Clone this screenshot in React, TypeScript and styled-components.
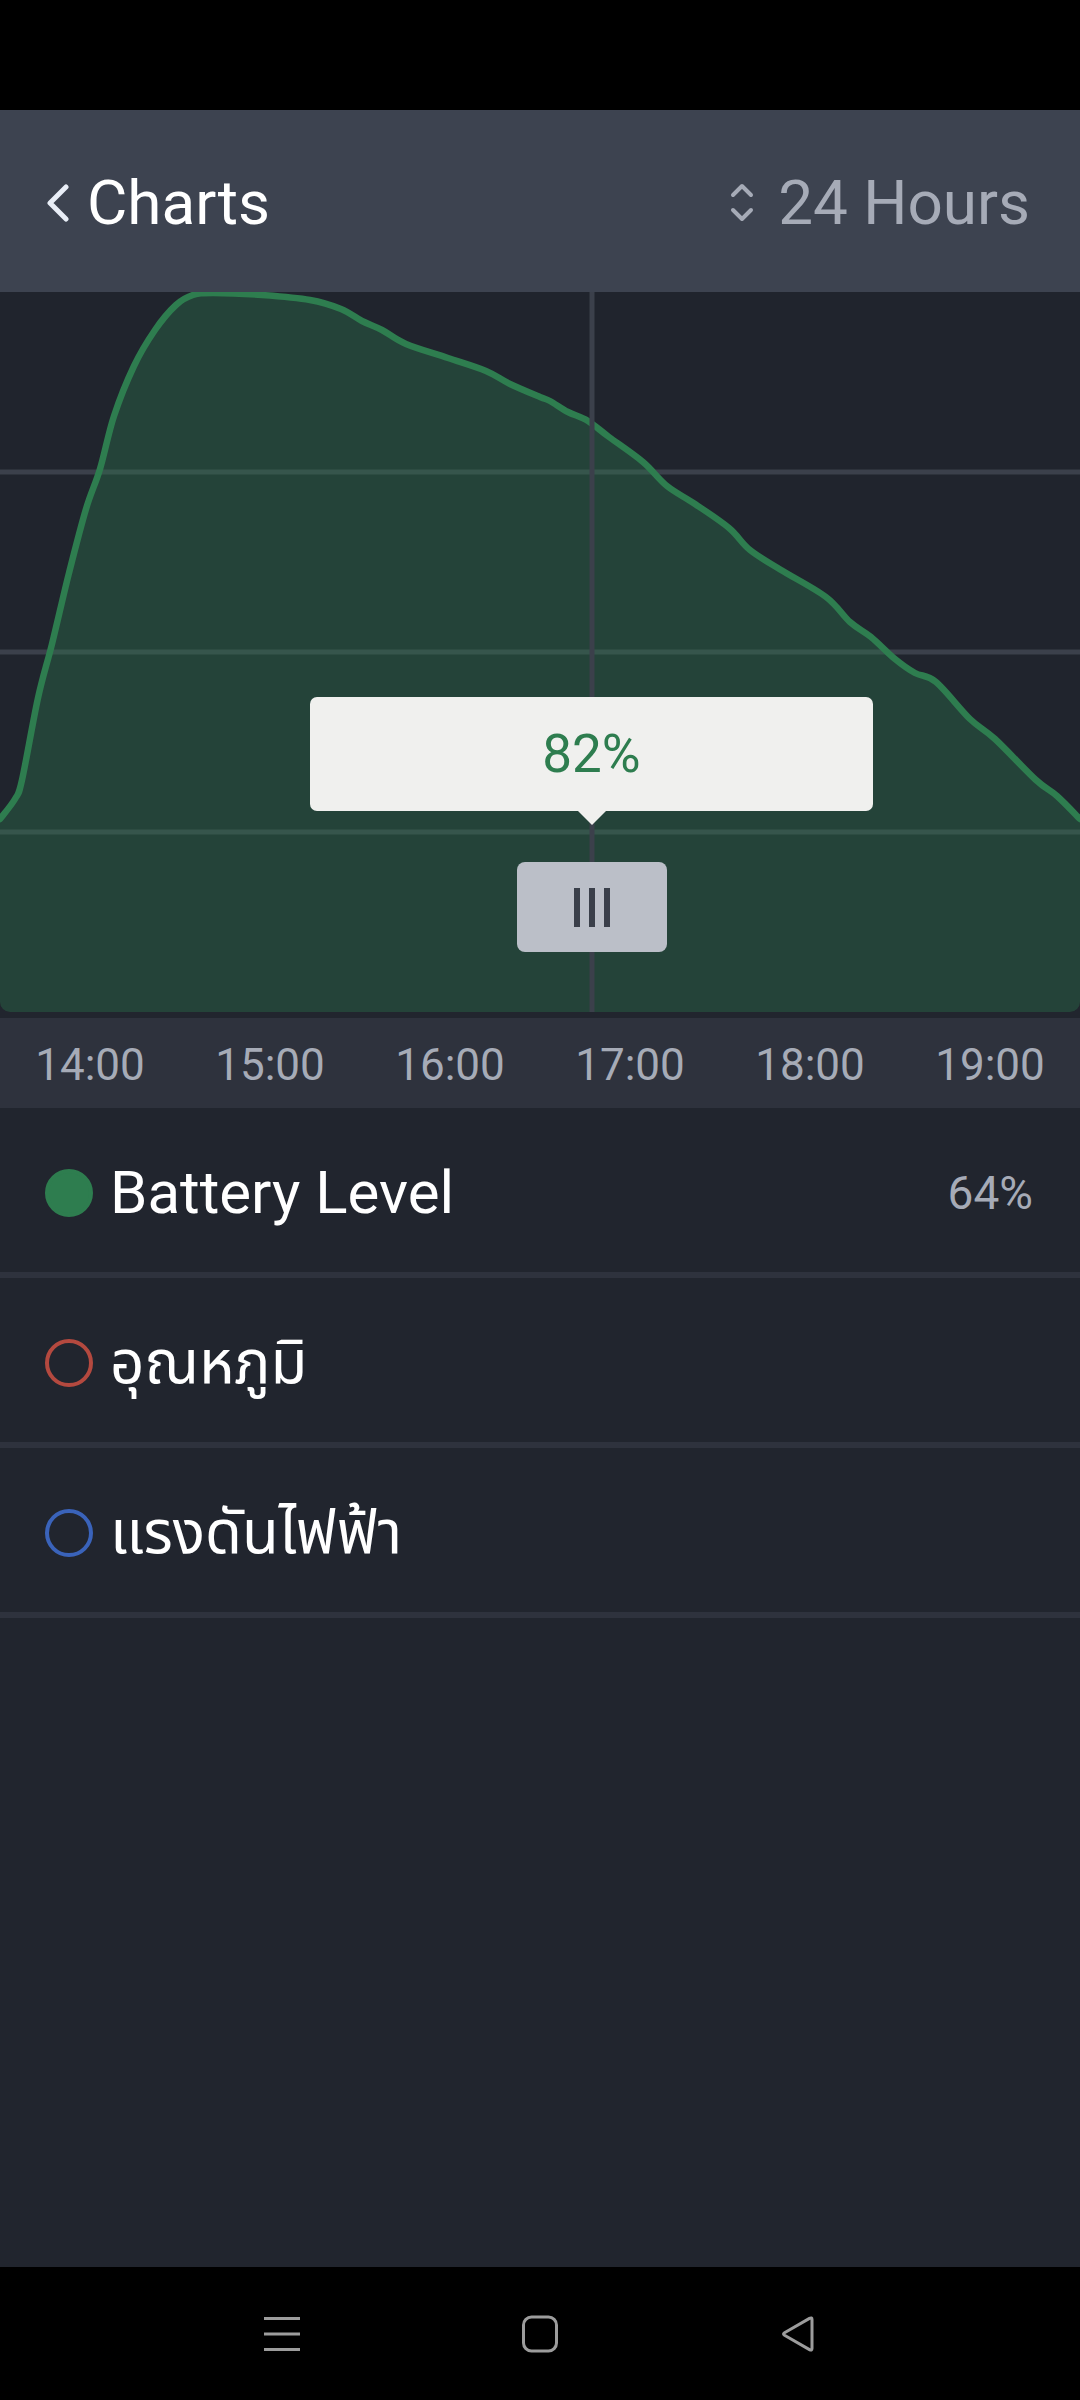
import React from 'react';
import styled, { createGlobalStyle } from 'styled-components';

const GlobalStyle = createGlobalStyle`
  html, body {
    margin: 0;
    padding: 0;
    background: #000;
  }
  body {
    font-family: Roboto, "Noto Sans", "Noto Sans Thai", "DejaVu Sans", sans-serif;
    -webkit-font-smoothing: antialiased;
  }
`;

// chart geometry, in the 1080 x 720 plot box
const CHART_W = 1080;
const CHART_H = 720;
const CURSOR_X = 592;

const points: [number, number][] = [
  [0, 527], [15, 507], [22, 488], [38, 406], [52, 352], [69, 281], [86, 217],
  [100, 177], [114, 124], [134, 74], [155, 38], [176, 13], [193, 3], [213, 1],
  [262, 3], [310, 8], [341, 17], [362, 29], [382, 38], [406, 52], [448, 66],
  [486, 79], [510, 92], [540, 105], [550, 109], [568, 120], [588, 129], [609, 145],
  [643, 170], [667, 194], [695, 212], [729, 236], [750, 258], [781, 278], [826, 305],
  [850, 330], [871, 345], [895, 367], [915, 381], [936, 390], [970, 427], [995, 447],
  [1036, 488], [1057, 504], [1080, 527],
];

// catmull-rom to bezier so the line bends smoothly
const smoothPath = (pts: [number, number][]) => {
  let d = `M ${pts[0][0]} ${pts[0][1]}`;
  for (let i = 0; i < pts.length - 1; i++) {
    const p0 = pts[i - 1] || pts[i];
    const p1 = pts[i];
    const p2 = pts[i + 1];
    const p3 = pts[i + 2] || p2;
    const c1x = p1[0] + (p2[0] - p0[0]) / 6;
    const c1y = p1[1] + (p2[1] - p0[1]) / 6;
    const c2x = p2[0] - (p3[0] - p1[0]) / 6;
    const c2y = p2[1] - (p3[1] - p1[1]) / 6;
    d += ` C ${c1x.toFixed(1)} ${c1y.toFixed(1)}, ${c2x.toFixed(1)} ${c2y.toFixed(1)}, ${p2[0]} ${p2[1]}`;
  }
  return d;
};

const hours = ['14:00', '15:00', '16:00', '17:00', '18:00', '19:00'];

const series = [
  { name: 'Battery Level', color: '#2e7d4f', filled: true, value: '64%' },
  { name: 'อุณหภูมิ', color: '#b4493f', filled: false, value: '' },
  { name: 'แรงดันไฟฟ้า', color: '#3a63ba', filled: false, value: '' },
];

const App = () => {
  const line = smoothPath(points);
  const area = `${line} L ${CHART_W} ${CHART_H} L 0 ${CHART_H} Z`;

  return (
    <Screen>
      <GlobalStyle />
      <StatusBar />
      <Header>
        <BackButton>
          <svg width="24" height="38" viewBox="0 0 24 38">
            <polyline points="20,3 4,19 20,35" fill="none" stroke="#e9eef7" strokeWidth="5" strokeLinecap="round" strokeLinejoin="round" />
          </svg>
          <Title>Charts</Title>
        </BackButton>
        <RangePicker>
          <svg width="24" height="40" viewBox="0 0 24 40">
            <polyline points="3,12 12,3 21,12" fill="none" stroke="#a6abb7" strokeWidth="4" strokeLinecap="round" strokeLinejoin="round" />
            <polyline points="3,27 12,36 21,27" fill="none" stroke="#a6abb7" strokeWidth="4" strokeLinecap="round" strokeLinejoin="round" />
          </svg>
          <RangeText>24 Hours</RangeText>
        </RangePicker>
      </Header>

      <ChartBox>
        <svg width={CHART_W} height={CHART_H} viewBox={`0 0 ${CHART_W} ${CHART_H}`}>
          {[180, 360, 540].map((y) => (
            <rect key={y} x="0" y={y - 2.5} width={CHART_W} height="5" fill="#3b404b" />
          ))}
          <path d={area} fill="rgba(46,125,79,0.35)" />
          <path d={line} fill="none" stroke="#2e7d4f" strokeWidth="6.5" strokeLinejoin="round" strokeLinecap="round" />
          <rect x={CURSOR_X - 2.5} y="0" width="5" height={CHART_H} fill="#3b404b" />
        </svg>
        <Tooltip>82%</Tooltip>
        <Handle>
          <Grip />
          <Grip />
          <Grip />
        </Handle>
      </ChartBox>

      <TimeAxis>
        {hours.map((h) => (
          <TimeLabel key={h}>{h}</TimeLabel>
        ))}
      </TimeAxis>

      <SeriesList>
        {series.map((s) => (
          <SeriesRow key={s.name}>
            <Dot $color={s.color} $filled={s.filled} />
            <SeriesName>{s.name}</SeriesName>
            <SeriesValue>{s.value}</SeriesValue>
          </SeriesRow>
        ))}
      </SeriesList>

      <Filler />

      <NavBar>
        <NavIcon>
          <svg width="38" height="36" viewBox="0 0 38 36">
            <rect x="1" y="1" width="36" height="3" fill="#9c9c9c" />
            <rect x="1" y="16.5" width="36" height="3" fill="#9c9c9c" />
            <rect x="1" y="32" width="36" height="3" fill="#9c9c9c" />
          </svg>
        </NavIcon>
        <NavIcon>
          <svg width="38" height="38" viewBox="0 0 38 38">
            <rect x="2.5" y="2" width="33" height="34" rx="8" fill="none" stroke="#9c9c9c" strokeWidth="3" />
          </svg>
        </NavIcon>
        <NavIcon>
          <svg width="38" height="38" viewBox="0 0 38 38">
            <path d="M33 4.5 L33 33.5 Q33 36 30.5 34.6 L5.5 20.3 Q3.5 19 5.5 17.7 L30.5 3.4 Q33 2 33 4.5 Z" fill="none" stroke="#9c9c9c" strokeWidth="3" strokeLinejoin="round" />
          </svg>
        </NavIcon>
      </NavBar>
    </Screen>
  );
};

export default App;

const Screen = styled.div`
  width: 1080px;
  height: 2400px;
  display: flex;
  flex-direction: column;
  background: #21252e;
  overflow: hidden;
`;

const StatusBar = styled.div`
  height: 110px;
  flex-shrink: 0;
  background: #000;
`;

const Header = styled.header`
  height: 182px;
  flex-shrink: 0;
  box-sizing: border-box;
  padding: 0 50px 0 46px;
  display: flex;
  align-items: center;
  justify-content: space-between;
  background: #3d4350;
`;

const BackButton = styled.div`
  display: flex;
  align-items: center;
  gap: 17px;
  padding-top: 4px;
`;

const Title = styled.span`
  font-size: 62px;
  color: #ffffff;
  line-height: 1;
`;

const RangePicker = styled.div`
  display: flex;
  align-items: center;
  gap: 24px;
  padding-top: 4px;
`;

const RangeText = styled.span`
  font-size: 62px;
  color: #a6abb7;
  line-height: 1;
`;

const ChartBox = styled.div`
  position: relative;
  height: 720px;
  flex-shrink: 0;
  background: #20242d;
  border-radius: 0 0 10px 10px;
  overflow: hidden;
  svg {
    display: block;
  }
`;

const Tooltip = styled.div`
  position: absolute;
  left: ${CURSOR_X - 282}px;
  top: 405px;
  width: 563px;
  height: 114px;
  border-radius: 7px;
  background: #f0f0ee;
  color: #2e7d4f;
  font-size: 53px;
  display: flex;
  align-items: center;
  justify-content: center;
  &::after {
    content: '';
    position: absolute;
    left: 50%;
    bottom: -14px;
    margin-left: -15px;
    border-left: 15px solid transparent;
    border-right: 15px solid transparent;
    border-top: 15px solid #f0f0ee;
  }
`;

const Handle = styled.div`
  position: absolute;
  left: ${CURSOR_X - 75}px;
  top: 570px;
  width: 150px;
  height: 90px;
  border-radius: 8px;
  background: #bbbfc8;
  display: flex;
  align-items: center;
  justify-content: center;
  gap: 9px;
`;

const Grip = styled.span`
  width: 6px;
  height: 39px;
  background: #3a3f4a;
`;

const TimeAxis = styled.div`
  margin-top: 6px;
  height: 90px;
  box-sizing: border-box;
  padding-top: 4px;
  flex-shrink: 0;
  display: grid;
  grid-template-columns: repeat(6, 1fr);
  align-items: center;
  background: #2e323d;
`;

const TimeLabel = styled.span`
  text-align: center;
  font-size: 44px;
  color: #a6abb7;
  line-height: 1;
`;

const SeriesList = styled.div`
  display: flex;
  flex-direction: column;
  flex-shrink: 0;
`;

const SeriesRow = styled.div`
  height: 170px;
  box-sizing: border-box;
  border-bottom: 6px solid #2e323d;
  padding: 6px 47px 0 45px;
  display: flex;
  align-items: center;
`;

const Dot = styled.span<{ $color: string; $filled: boolean }>`
  width: 48px;
  height: 48px;
  box-sizing: border-box;
  border-radius: 50%;
  flex-shrink: 0;
  background: ${(p) => (p.$filled ? p.$color : 'transparent')};
  border: 4px solid ${(p) => p.$color};
`;

const SeriesName = styled.span`
  margin-left: 17px;
  flex: 1;
  font-size: 60px;
  color: #ffffff;
  line-height: 1.2;
`;

const SeriesValue = styled.span`
  font-size: 46px;
  color: #a6abb7;
`;

const Filler = styled.div`
  flex: 1;
`;

const NavBar = styled.nav`
  height: 133px;
  flex-shrink: 0;
  background: #000;
  display: flex;
  align-items: center;
  justify-content: center;
  gap: 220px;
`;

const NavIcon = styled.div`
  width: 38px;
  height: 38px;
  display: flex;
  align-items: center;
  justify-content: center;
`;
